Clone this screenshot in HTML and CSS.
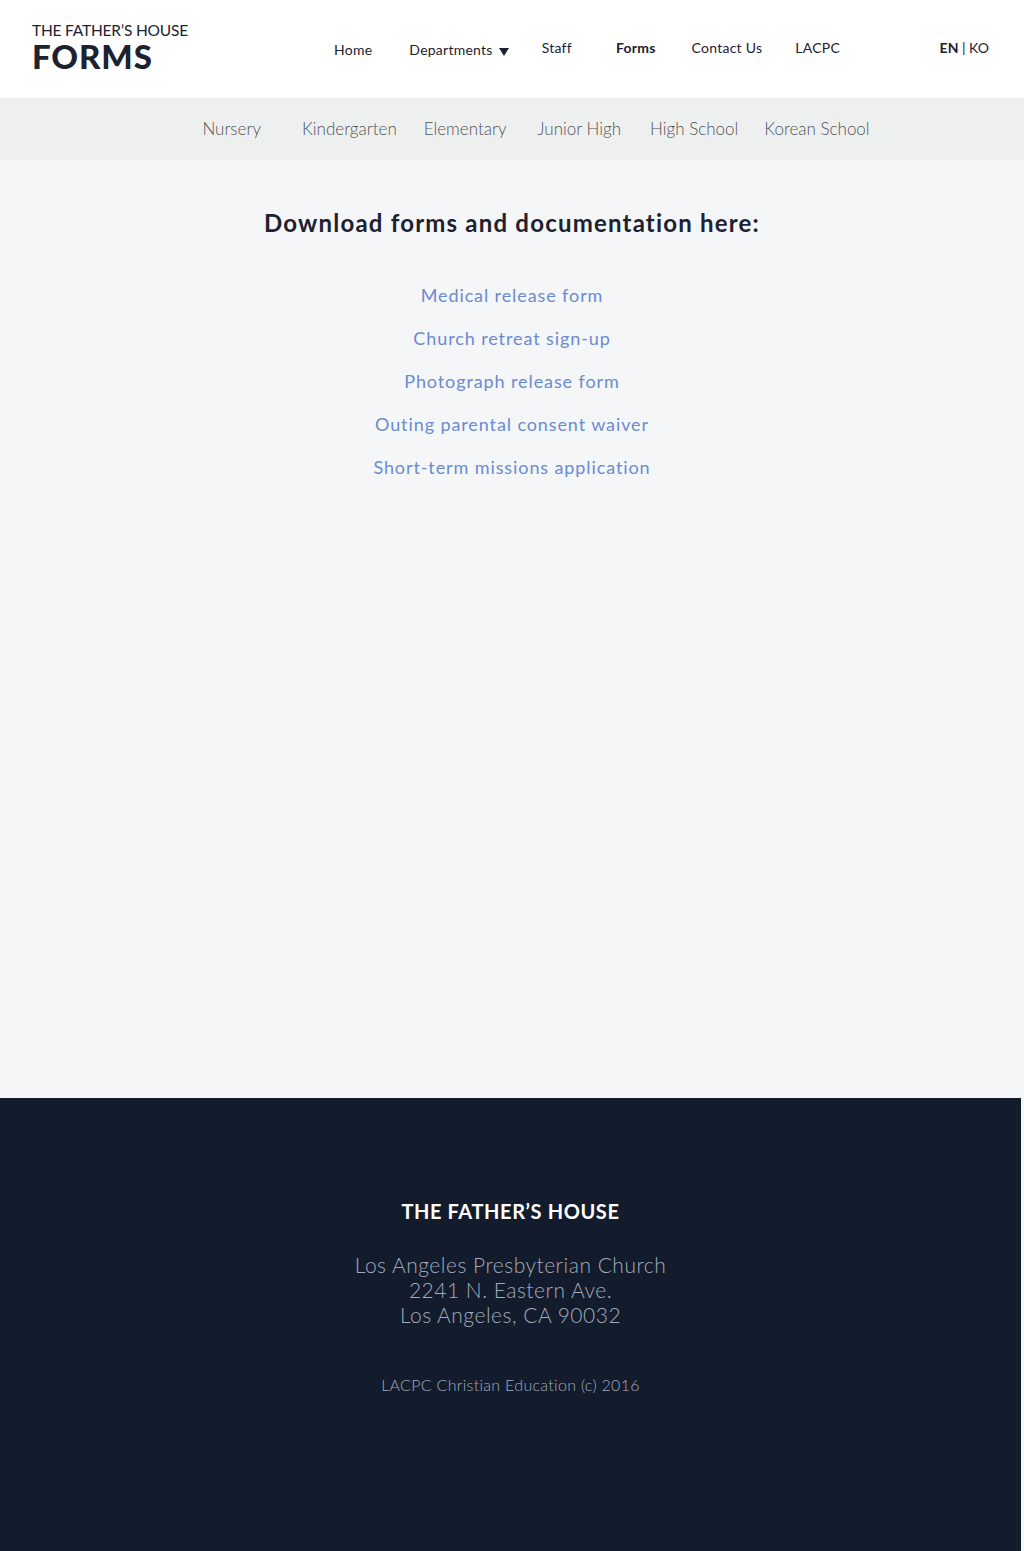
FILE: index.html
```html
<!DOCTYPE html>
<html lang="en">
<head>
<meta charset="utf-8">
<title>Forms - The Father's House</title>
<link rel="stylesheet" href="styles.css">
</head>
<body>
<header class="topbar">
  <a class="brand" href="#">
    <span class="brand-small">THE FATHER’S HOUSE</span>
    <span class="brand-big">FORMS</span>
  </a>
  <nav class="mainnav">
    <a href="#" class="nav-home">Home</a>
    <a href="#" class="nav-dept">Departments <span class="caret"></span></a>
    <a href="#" class="nav-staff">Staff</a>
    <a href="#" class="nav-forms active">Forms</a>
    <a href="#" class="nav-contact">Contact Us</a>
    <a href="#" class="nav-lacpc">LACPC</a>
  </nav>
  <div class="lang"><b>EN</b> | KO</div>
</header>
<nav class="subnav">
  <a href="#" class="s1">Nursery</a>
  <a href="#" class="s2">Kindergarten</a>
  <a href="#" class="s3">Elementary</a>
  <a href="#" class="s4">Junior High</a>
  <a href="#" class="s5">High School</a>
  <a href="#" class="s6">Korean School</a>
</nav>
<main class="content">
  <h1 class="title">Download forms and documentation here:</h1>
  <ul class="forms">
    <li><a href="#">Medical release form</a></li>
    <li><a href="#">Church retreat sign-up</a></li>
    <li><a href="#">Photograph release form</a></li>
    <li><a href="#">Outing parental consent waiver</a></li>
    <li><a href="#">Short-term missions application</a></li>
  </ul>
</main>
<footer class="footer">
  <div class="footer-title">THE FATHER’S HOUSE</div>
  <address class="footer-address">Los Angeles Presbyterian Church<br>2241 N. Eastern Ave.<br>Los Angeles, CA 90032</address>
  <div class="footer-copy">LACPC Christian Education (c) 2016</div>
</footer>
</body>
</html>
```
FILE: styles.css
```css
* { box-sizing: border-box; }
html, body { margin: 0; padding: 0; }
body {
  font-family: Lato, "Open Sans", "Liberation Sans", sans-serif;
  background: #f5f6f8;
  color: #1d2130;
  min-height: 1551px;
  display: flex;
  flex-direction: column;
}
a { text-decoration: none; color: inherit; }

.topbar {
  height: 98px;
  background: #ffffff;
  display: flex;
  align-items: flex-start;
  padding: 0 35px 0 32px;
}
.brand {
  display: flex;
  flex-direction: column;
  padding-top: 21px;
  color: #1d2130;
  width: 302px;
}
.brand-small {
  font-size: 15.5px;
  font-weight: 400;
  line-height: 18px;
  letter-spacing: -0.2px;
}
.brand-big {
  font-size: 33px;
  font-weight: 900;
  line-height: 34px;
  letter-spacing: 0.9px;
}
.mainnav {
  display: flex;
  padding-top: 39px;
  font-size: 14px;
  letter-spacing: 0.25px;
  color: #1d2130;
  flex: 1;
}
.mainnav a { display: block; line-height: 18px; }
.nav-home { margin-top: 2px; margin-right: 37px; }
.nav-dept { margin-top: 2px; margin-right: 33px; display: flex !important; align-items: center; }
.caret {
  display: inline-block;
  width: 0;
  height: 0;
  margin-left: 6px;
  margin-top: 3px;
  border-left: 5px solid transparent;
  border-right: 5px solid transparent;
  border-top: 8px solid #1d2130;
}
.nav-staff { margin-right: 44px; }
.nav-forms { margin-right: 36px; }
.active { font-weight: 700; }
.nav-contact { margin-right: 33px; }
.lang {
  padding-top: 39px;
  font-size: 14px;
  line-height: 18px;
  color: #1d2130;
}

.subnav {
  height: 62px;
  background: #eef0f0;
  display: flex;
  justify-content: center;
  align-items: center;
  font-size: 17px;
  font-weight: 300;
  color: #505458;
  padding-left: 48px;
}
.subnav a { line-height: 20px; }
.s1 { margin-right: 41px; }
.s2 { margin-right: 27px; }
.s3 { margin-right: 31px; }
.s4 { margin-right: 29px; }
.s5 { margin-right: 26px; }

.content {
  flex: 1;
  display: flex;
  flex-direction: column;
  align-items: center;
  padding-top: 48px;
}
.title {
  margin: 0;
  font-size: 24px;
  font-weight: 700;
  line-height: 30px;
  letter-spacing: 1.2px;
  color: #1d2130;
}
.forms {
  list-style: none;
  margin: 45px 0 0;
  padding: 0;
  display: flex;
  flex-direction: column;
  align-items: center;
  gap: 19px;
}
.forms li { line-height: 24px; height: 24px; }
.forms a {
  font-size: 18px;
  color: #6a8bd1;
  letter-spacing: 0.9px;
}

.footer {
  height: 453px;
  background: #121c2d;
  margin-right: 3px;
  display: flex;
  flex-direction: column;
  align-items: center;
  padding-top: 100px;
  text-align: center;
}
.footer-title {
  color: #ffffff;
  font-size: 20px;
  font-weight: 700;
  line-height: 26px;
  letter-spacing: 0.6px;
}
.footer-address {
  font-style: normal;
  margin-top: 28px;
  color: #a3abb9;
  font-size: 21px;
  font-weight: 300;
  line-height: 25px;
  letter-spacing: 0.5px;
}
.footer-copy {
  margin-top: 48px;
  color: #a3abb9;
  font-size: 16px;
  font-weight: 300;
  line-height: 20px;
  letter-spacing: 0.3px;
}
```
